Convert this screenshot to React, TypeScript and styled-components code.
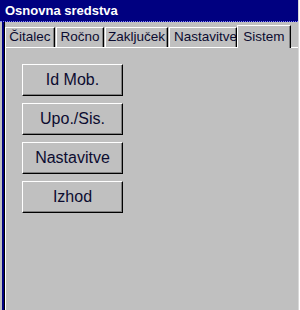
import styled, { createGlobalStyle } from 'styled-components';

const GlobalStyle = createGlobalStyle`
  html, body {
    margin: 0;
    padding: 0;
    background: #ffffff;
  }
  body {
    font-family: 'Liberation Sans', Arial, sans-serif;
  }
`;

const tabs = [
  { label: 'Čitalec', width: 50 },
  { label: 'Ročno', width: 48 },
  { label: 'Zaključek', width: 63 },
  { label: 'Nastavitve', width: 68 },
  { label: 'Sistem', width: 54, active: true },
];
const buttons = ['Id Mob.', 'Upo./Sis.', 'Nastavitve', 'Izhod'];

export default function App() {
  return (
    <>
      <GlobalStyle />
      <Window>
        <TitleBar>Osnovna sredstva</TitleBar>
        <Body>
          <TabRow>
            {tabs.map((t) => (
              <Tab key={t.label} w={t.width} active={t.active}>
                {t.label}
              </Tab>
            ))}
          </TabRow>
          <Panel>
            {buttons.map((b) => (
              <Button key={b}>{b}</Button>
            ))}
          </Panel>
        </Body>
      </Window>
    </>
  );
}

const Window = styled.div`
  width: 298px;
  height: 310px;
  display: flex;
  flex-direction: column;
  background: #c0c0c0;
  overflow: hidden;
  border-right: 1px solid #d8d8d8;
`;

const TitleBar = styled.div`
  height: 22px;
  box-sizing: border-box;
  background: #000080;
  color: #ffffff;
  font-weight: bold;
  font-size: 13px;
  line-height: 21px;
  padding-left: 5px;
  border-bottom: 1px dotted #8080ff;
`;

const Body = styled.div`
  flex: 1;
  display: flex;
  flex-direction: column;
  margin-left: 2px;
  border-left: 2px solid #000080;
  box-shadow: inset 1px 0 0 #000000;
  padding-left: 1px;
  padding-top: 3px;
`;

const TabRow = styled.div`
  display: flex;
  align-items: flex-end;
  height: 22px;
`;

const Tab = styled.div<{ w: number; active?: boolean }>`
  width: ${({ w }) => w}px;
  height: ${({ active }) => (active ? '23px' : '20px')};
  box-sizing: border-box;
  margin-right: 1px;
  margin-bottom: ${({ active }) => (active ? '-1px' : '0')};
  position: relative;
  z-index: ${({ active }) => (active ? 1 : 0)};
  background: #c0c0c0;
  border-top: 1px solid #ffffff;
  border-left: 1px solid #ffffff;
  border-right: 1px solid #000000;
  box-shadow: inset -1px 0 0 #808080;
  font-size: 13.5px;
  line-height: ${({ active }) => (active ? '21px' : '18px')};
  color: #0c0c30;
  text-align: center;
  white-space: nowrap;
  overflow: hidden;
  &:nth-child(4) {
    text-align: left;
    padding-left: 4px;
    margin-right: 0;
  }
`;

const Panel = styled.div`
  flex: 1;
  border-top: 1px solid #ffffff;
  border-left: 1px solid #ffffff;
  display: flex;
  flex-direction: column;
  align-items: flex-start;
  gap: 7px;
  padding: 16px 0 0 16px;
`;

const Button = styled.button`
  width: 101px;
  height: 32px;
  box-sizing: border-box;
  background: #c0c0c0;
  border-top: 1px solid #ffffff;
  border-left: 1px solid #ffffff;
  border-right: 1px solid #000000;
  border-bottom: 1px solid #000000;
  box-shadow: inset -1px -1px 0 #808080;
  font-family: 'Liberation Sans', Arial, sans-serif;
  font-size: 16px;
  color: #0c0c30;
  padding: 0;
`;
